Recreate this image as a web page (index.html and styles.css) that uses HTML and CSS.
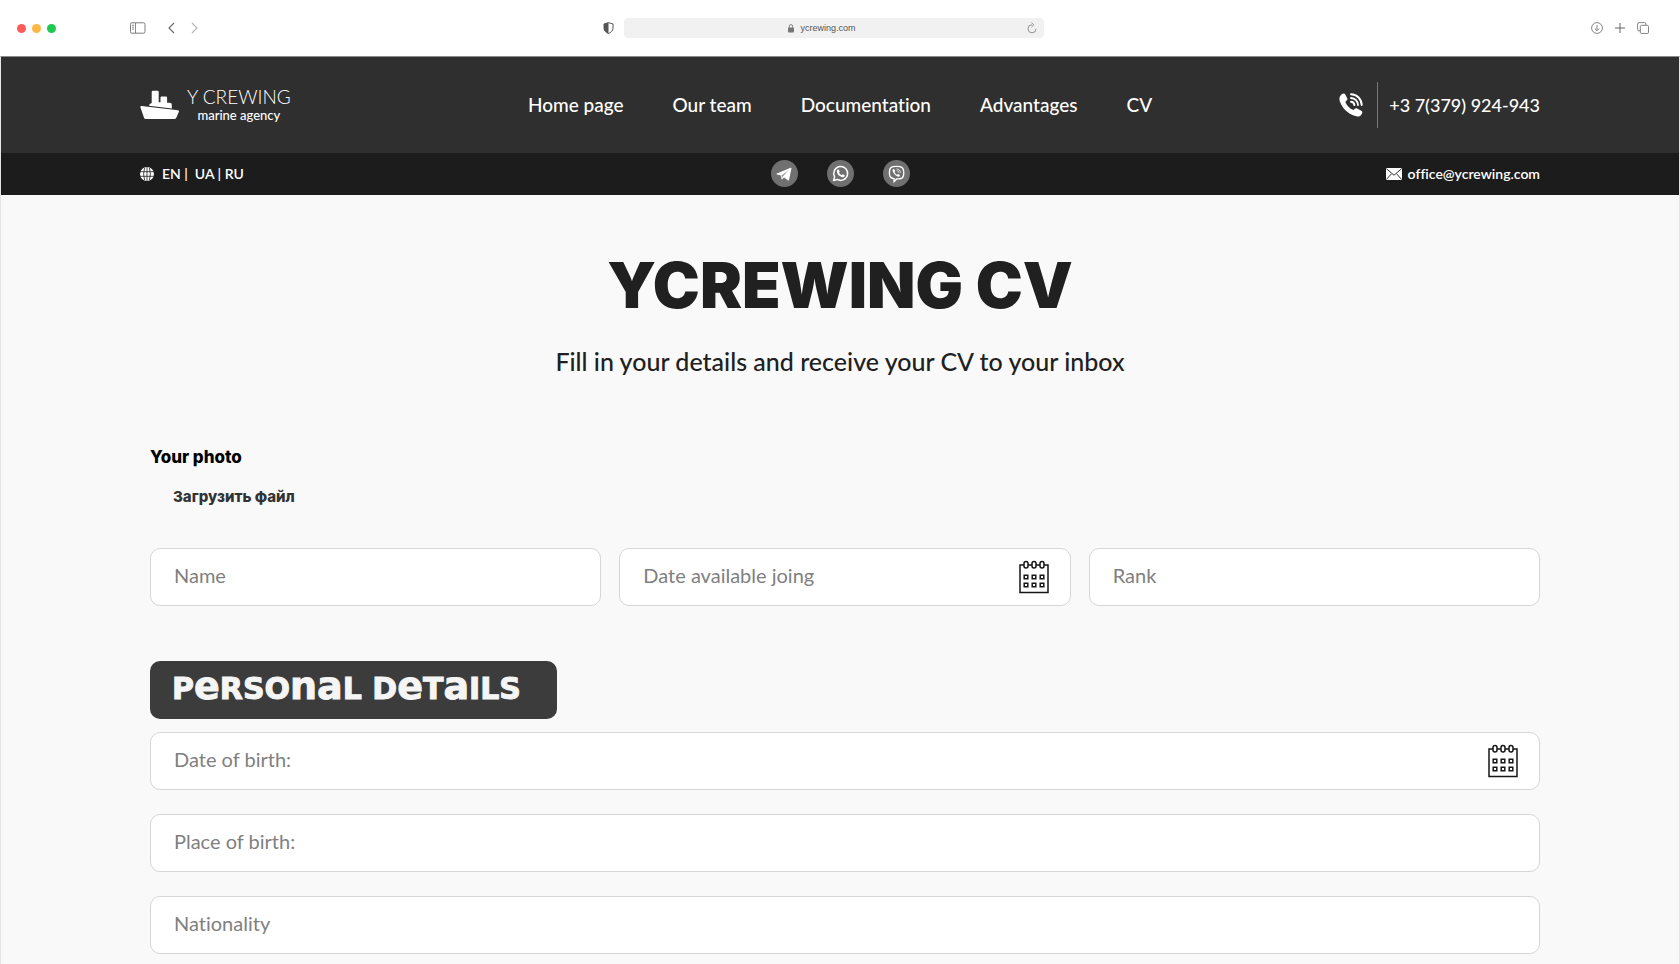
FILE: index.html
```html
<!DOCTYPE html>
<html lang="en">
<head>
<meta charset="utf-8">
<meta name="viewport" content="width=device-width, initial-scale=1">
<title>YCREWING CV</title>
<link rel="stylesheet" href="styles.css">
</head>
<body>
<svg class="sprite" aria-hidden="true">
  <symbol id="calendar" viewBox="0 0 30 34">
    <g fill="none" stroke="#161616" stroke-width="1.5">
      <path d="M5 5H1v27.500h28V5h-4M9 5h4M17 5h4"/>
      <rect x="5" y="1.500" width="4" height="6.500" rx="2"/>
      <rect x="13" y="1.500" width="4" height="6.500" rx="2"/>
      <rect x="21" y="1.500" width="4" height="6.500" rx="2"/>
      <path d="M5.200 15.200h3.600v3.600H5.200zM13.200 15.200h3.600v3.600h-3.600zM21.200 15.200h3.600v3.600h-3.600zM5.200 23.200h3.600v3.600H5.200zM13.200 23.200h3.600v3.600h-3.600zM21.200 23.200h3.600v3.600h-3.600z"/>
    </g>
  </symbol>
</svg>

<div class="browser">
  <div class="browser-side">
    <span class="dots"><i class="dot dot-red"></i><i class="dot dot-amber"></i><i class="dot dot-green"></i></span>
    <button class="tool tool-sidebar" type="button" aria-label="Sidebar">
      <svg width="16" height="12" viewBox="0 0 16 12" fill="none" stroke="#7c7c7c"><rect x=".5" y=".8" width="14.500" height="10.400" rx="1.500"/><path d="M5.500 1v10M2 3.300h2M2 5.200h2M2 7.100h2" stroke-width=".9"/></svg>
    </button>
    <button class="tool tool-back" type="button" aria-label="Back">
      <svg width="7" height="12" viewBox="0 0 7 12" fill="none" stroke="#666" stroke-width="1.100"><path d="M6 1 1 6l5 5"/></svg>
    </button>
    <button class="tool" type="button" aria-label="Forward">
      <svg width="7" height="12" viewBox="0 0 7 12" fill="none" stroke="#b5b5b5" stroke-width="1.100"><path d="m1 1 5 5-5 5"/></svg>
    </button>
  </div>
  <div class="browser-center">
    <button class="tool" type="button" aria-label="Privacy report">
      <svg width="11" height="12" viewBox="0 0 11 12"><path d="M5.500.6 10 2v4.200c0 2.500-2 4.300-4.500 5.300C3 10.500 1 8.700 1 6.200V2z" fill="none" stroke="#555"/><path d="M5.500.6 1 2v4.200c0 2.500 2 4.300 4.500 5.300z" fill="#555"/></svg>
    </button>
    <div class="address">
      <span class="site">
        <svg width="6" height="9" viewBox="0 0 6 9"><rect y="3.500" width="6" height="5" rx=".8" fill="#777"/><path d="M1.300 4V2.300a1.700 1.700 0 0 1 3.400 0V4" fill="none" stroke="#777" stroke-width=".9"/></svg>
        ycrewing.com
      </span>
      <button class="tool" type="button" aria-label="Reload">
        <svg width="10" height="12" viewBox="0 0 10 12" fill="none" stroke="#888" stroke-width=".9"><path d="M5 2.800a4 4 0 1 0 4 4M4.500.7 6.800 2.900 4.500 5.100"/></svg>
      </button>
    </div>
  </div>
  <div class="browser-end">
    <button class="tool" type="button" aria-label="Downloads">
      <svg width="12" height="12" viewBox="0 0 12 12" fill="none" stroke="#777" stroke-width=".9"><circle cx="6" cy="6" r="5.400"/><path d="M6 3v5.600M3.800 6.500 6 8.700l2.200-2.200"/></svg>
    </button>
    <button class="tool" type="button" aria-label="New tab">
      <svg width="10" height="12" viewBox="0 0 10 12" stroke="#666"><path d="M5 1v10M0 6h10"/></svg>
    </button>
    <button class="tool" type="button" aria-label="Tabs">
      <svg width="12" height="12" viewBox="0 0 12 12" fill="none" stroke="#777" stroke-width=".9"><rect x="3.300" y="3.300" width="8.200" height="8.200" rx="1.300"/><path d="M3.300 8.800H2A1.300 1.300 0 0 1 .6 7.500V2A1.400 1.400 0 0 1 2 .6h5.500a1.400 1.400 0 0 1 1.400 1.400v1.300"/></svg>
    </button>
  </div>
</div>

<div class="site-frame">
  <header>
    <div class="header-main">
      <a class="logo" href="#">
        <svg width="40" height="30" viewBox="0 0 40 30" fill="#fff"><path d="M1.600 16.100 38 20.300q1.400.2.900 1.500l-2.600 6q-.6 1.300-2 1.300H5.800q-1.400 0-1.800-1.300L.4 17.200q-.3-1.200 1.200-1.100z"/><path d="M9 15.800q.2-2.600 2.700-2.900V2q0-1.200 1.200-1.200h4.600q1.200 0 1.200 1.200v10.300h1.800V7.700q0-1.200 1.200-1.200h4.200q1.200 0 1.200 1.200v5.100h2.700q2 0 2 2v3.700z"/></svg>
        <span class="logo-text"><span class="logo-name">Y CREWING</span><span class="logo-tag">marine agency</span></span>
      </a>
      <nav class="nav">
        <a href="#">Home page</a>
        <a href="#">Our team</a>
        <a href="#">Documentation</a>
        <a href="#">Advantages</a>
        <a href="#">CV</a>
      </nav>
      <a class="phone" href="tel:+37379924943">
        <svg width="24" height="24" viewBox="0 0 24 24"><path d="M2.200 1.700C3.600.4 5.200.1 6 1l2.200 4.200c.4.900.1 1.600-.6 2.300L6.300 8.900c1.500 3.700 4.200 6.400 8.100 8.200l1.500-1.400c.7-.6 1.400-.7 2.200-.3l4.600 2.600c1.100.8.700 2.500-.6 3.900-1.300 1.500-3.400 2-5.800 1.200C8.500 20.500 3 15 .7 8 0 5.500.6 3.200 2.200 1.700z" fill="#fff"/><path d="M12 1.300c6 .1 10.600 4.800 10.700 10.800M12 5c4 .1 6.900 3.200 7 7.100M12 8.700c2 .1 3.300 1.500 3.400 3.400" fill="none" stroke="#fff" stroke-width="1.900" stroke-linecap="round"/></svg>
        <span class="phone-number">+3 7(379) 924-943</span>
      </a>
    </div>
    <div class="header-sub">
      <div class="languages">
        <svg width="14" height="14" viewBox="0 0 14 14"><circle cx="7" cy="7" r="7" fill="#fff"/><path d="M7 0v14M0 4.700h14M0 9.300h14M4.600.8Q2.600 7 4.600 13.200M9.400.8q2 6.200 0 12.400" fill="none" stroke="#1c1c1c" stroke-width=".8"/></svg>
        <span><a href="#">EN</a> | &nbsp;<a href="#">UA</a> | <a href="#">RU</a></span>
      </div>
      <div class="social">
        <a href="#" aria-label="Telegram"><svg viewBox="0 0 28 28"><path d="M5.600 14.200 20.300 8.100q1-.3.900.8l-2.400 11.600q-.4 1.200-1.500.4l-3.700-2.800-2 1.900q-.6.500-.7-.3l-.8-3.700-4.400-1.300q-.8-.3-.1-.5z" fill="#fff"/><path d="m10.800 16.200 7.300-5.500-5.900 6.600-.6 2.200z" fill="#a0a0a0"/></svg></a>
        <a href="#" aria-label="WhatsApp"><svg viewBox="0 0 28 28"><path d="m6.800 21.300 1.100-3.900a7.200 7.200 0 1 1 2.800 2.800z" fill="none" stroke="#fff" stroke-width="1.500" stroke-linejoin="round"/><path d="M10.900 10.200c.7-.7 1.300-.5 1.500 0l.7 1.600c.2.400-.7 1-.6 1.300.6 1.200 1.500 2 2.700 2.500.3.100.9-1 1.300-.8l1.600.8c.5.200.3 1.200-.3 1.700-1.100 1-2.900.5-4.600-.6-1.500-1-2.500-2.400-2.900-3.700-.3-1.200 0-2.100.6-2.800z" fill="#fff"/></svg></a>
        <a href="#" aria-label="Viber"><svg viewBox="0 0 28 28"><path d="M10.500 6.900q3.500-.7 7 0 3.400.7 3.800 3.800.4 2.900 0 5.300-.5 3-3.600 3.400-1.700.3-3.500.2l-2.700 2.700v-3q-3.900-.3-4.600-3.500-.5-2.600 0-5.400.5-2.900 3.600-3.500z" fill="none" stroke="#fff" stroke-width="1.400"/><path d="M10.400 9.900c.5-.6 1-.6 1.400-.1l.9 1.300c.3.500-.7 1-.6 1.500.4 1.200 1.200 2.100 2.300 2.600.5.200 1-.9 1.500-.6l1.400.9c.5.400.1 1.100-.4 1.500-.7.700-1.700.2-3.100-.7-2-1.300-3.300-3.200-3.800-5-.1-.6.100-1 .4-1.400z" fill="#fff"/><path d="M14 9.300c2.500 0 4 1.700 4 4M14.200 11c1.300.1 2.100.9 2.200 2.200" fill="none" stroke="#fff" stroke-width=".8"/></svg></a>
      </div>
      <a class="mail" href="mailto:office@ycrewing.com">
        <svg width="16" height="12" viewBox="0 0 16 12"><rect width="16" height="12" rx="1" fill="#fff"/><path d="M.5.800 8 7.200 15.500.800M.5 11.300l5-5.600M15.500 11.300l-5-5.600" fill="none" stroke="#1c1c1c" stroke-width=".9"/></svg>
        office@ycrewing.com
      </a>
    </div>
  </header>

  <main>
    <h1>YCREWING CV</h1>
    <p class="lead">Fill in your details and receive your CV to your inbox</p>
    <form>
      <h2 class="photo-title" id="photo-title">Your photo</h2>
      <button class="upload" type="button" aria-describedby="photo-title">Загрузить файл</button>
      <div class="row">
        <div class="field"><input type="text" aria-label="Name" placeholder="Name"></div>
        <div class="field"><input type="text" aria-label="Date available joing" placeholder="Date available joing"><svg class="calendar"><use href="#calendar"/></svg></div>
        <div class="field"><input type="text" aria-label="Rank" placeholder="Rank"></div>
      </div>
      <h2 class="section-title">P<span>e</span>RSO<span>na</span>L D<span>e</span>T<span>a</span>ILS</h2>
      <div class="stack">
        <div class="field"><input type="text" aria-label="Date of birth:" placeholder="Date of birth:"><svg class="calendar"><use href="#calendar"/></svg></div>
        <div class="field"><input type="text" aria-label="Place of birth:" placeholder="Place of birth:"></div>
        <div class="field"><input type="text" aria-label="Nationality" placeholder="Nationality"></div>
      </div>
    </form>
  </main>
</div>
</body>
</html>
```
FILE: styles.css
```css
* { box-sizing: border-box; }

body {
  margin: 0;
  background: #fff;
  color: #202020;
  font-family: Lato, "Open Sans", sans-serif;
  font-variant-ligatures: none;
}

a { color: inherit; text-decoration: none; }
button { border: 0; padding: 0; background: none; color: inherit; font: inherit; cursor: pointer; }
svg { display: block; flex: none; }
.sprite { position: absolute; width: 0; height: 0; }

/* Browser bar */
.browser {
  display: grid;
  grid-template-columns: 1fr auto 1fr;
  align-items: center;
  height: 56px;
  padding: 0 31px 0 17px;
}
.browser-side, .browser-center, .browser-end, .dots { display: flex; align-items: center; }
.dots { gap: 6px; }
.dot { width: 9px; height: 9px; border-radius: 50%; }
.dot-red { background: #fc5b57; }
.dot-amber { background: #fdb843; }
.dot-green { background: #1fc94f; }
.tool-sidebar { margin-left: 74px; }
.tool-back { margin: 0 16px 0 22px; }
.browser-center { gap: 10px; margin-right: 20px; }
.address {
  display: flex;
  align-items: center;
  width: 25vw;
  height: 20px;
  padding-right: 7px;
  border-radius: 4px;
  background: #f1f1f1;
}
.site {
  flex: 1;
  display: flex;
  align-items: center;
  justify-content: center;
  gap: 6px;
  padding-right: 6px;
  color: #555;
  font: 9px "Liberation Sans", sans-serif;
}
.browser-end { justify-content: flex-end; gap: 12px; }

/* Header */
.site-frame {
  border: solid;
  border-width: 1px 1px 0;
  border-color: #8a8a8a #e4e4e4;
  background: #f9f9f9;
}
header { color: #fff; }
.header-main, .header-sub {
  display: grid;
  grid-template-columns: 1fr auto 1fr;
  align-items: center;
  padding: 0 139px 1px;
}
.header-main { height: 96px; background: #2f2f2f; }
.header-sub { height: 42px; background: #1c1c1c; font-size: 14px; font-weight: 600; line-height: 18px; }
.logo { display: flex; align-items: center; gap: 7px; }
.logo-text { display: flex; flex-direction: column; align-items: center; padding-top: 2px; }
.logo-name { font-size: 19px; font-weight: 300; line-height: 20px; }
.logo-tag { font-size: 13px; font-weight: 500; line-height: 17px; }
.nav { display: flex; gap: 49px; font-size: 19px; font-weight: 500; line-height: 24px; }
.phone { display: flex; align-items: center; justify-content: flex-end; gap: 14px; font-size: 18px; font-weight: 500; }
.phone-number { padding-left: 11px; border-left: 1px solid #777; line-height: 46px; }
.languages, .mail { display: flex; align-items: center; gap: 8px; }
.mail { justify-content: flex-end; gap: 6px; }
.social { display: flex; gap: 29px; }
.social a { border-radius: 50%; background: #707070; }
.social svg { width: 27px; height: 27px; }

/* CV form */
main { padding: 48px 139px 10px 149px; }
h1, h2, p { margin: 0; }
h1 {
  margin-left: -10px;
  text-align: center;
  font-family: Inter, sans-serif;
  font-size: 63px;
  font-weight: 900;
  line-height: 84px;
}
.lead {
  margin: 17px 0 64px -10px;
  text-align: center;
  font-size: 25px;
  font-weight: 500;
  line-height: 34px;
}
.photo-title, .upload { font-family: Inter, sans-serif; font-weight: 800; }
.photo-title { color: #000; font-size: 17px; line-height: 30px; }
.upload { display: block; margin: 13px 0 39px; padding-left: 23px; color: #333; font-size: 15px; line-height: 24px; }
.row { display: grid; grid-template-columns: repeat(3, 1fr); gap: 18px; }
.stack { display: grid; gap: 24px; }
.field { position: relative; }
.field input {
  display: block;
  width: 100%;
  height: 58px;
  padding: 0 23px 4px;
  border: 1px solid #d6d6d6;
  border-radius: 10px;
  background: #fff;
  color: #202020;
  font: 20px Lato, sans-serif;
  font-variant-ligatures: none;
}
.field input::placeholder { color: #808080; opacity: 1; }
.calendar { position: absolute; top: 12px; right: 22px; width: 30px; height: 34px; }
.section-title {
  width: fit-content;
  height: 58px;
  margin: 55px 0 13px;
  padding: 0 36px 0 22px;
  border-radius: 10px;
  background: #3c3c3c;
  color: #f5f5f5;
  font: bold 30px/56px "DejaVu Sans", sans-serif;
  -webkit-text-stroke: 1px #f5f5f5;
}
.section-title span { font-size: 38px; line-height: 1; }
```
